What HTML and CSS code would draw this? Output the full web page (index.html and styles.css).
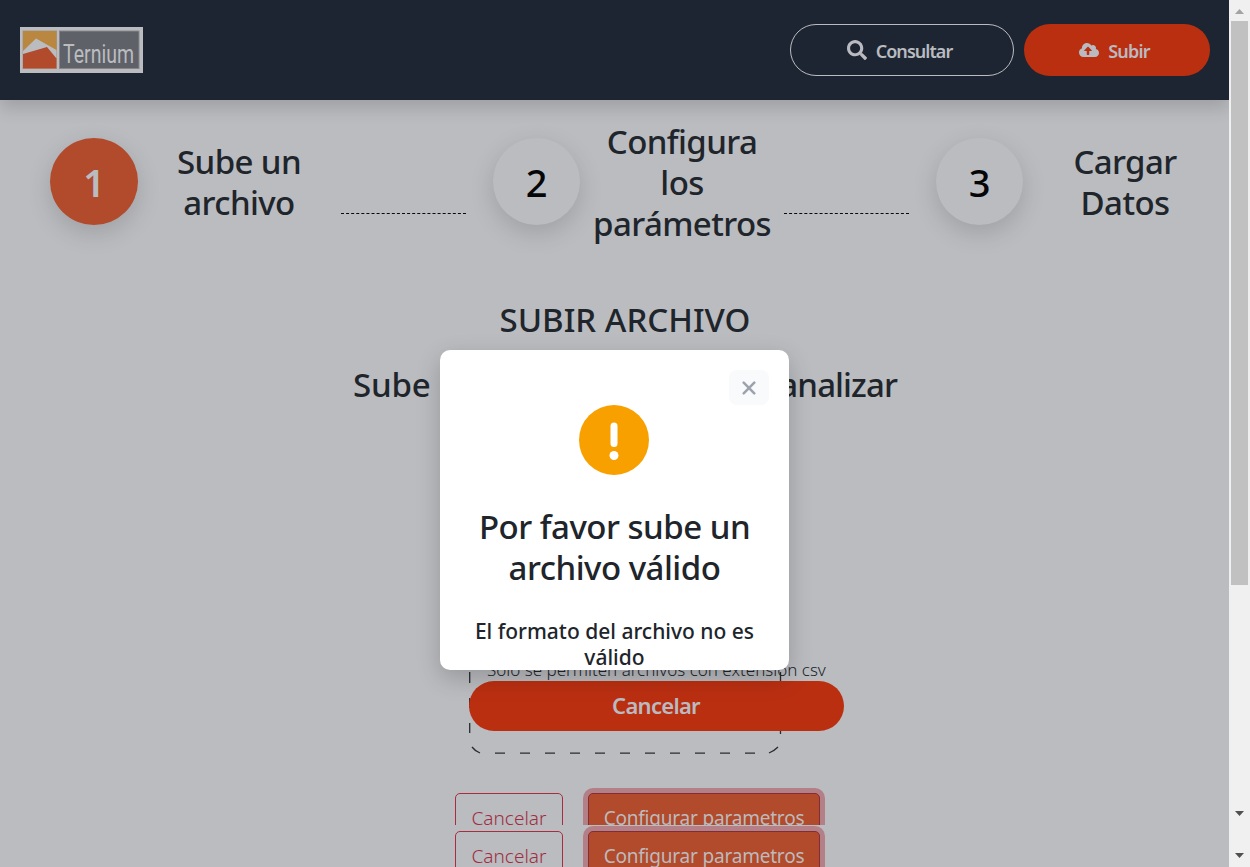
FILE: index.html
```html
<!DOCTYPE html>
<html lang="es">
<head>
<meta charset="utf-8">
<title>Subir archivo</title>
<link rel="stylesheet" href="styles.css">
</head>
<body>
<div class="window">
  <div class="page">
    <header class="navbar">
      <svg class="logo" width="123" height="46" viewBox="0 0 123 46">
        <rect width="123" height="46" fill="#bbbcc0"/>
        <rect x="2.500" y="3.500" width="34.500" height="38.500" fill="#999a9e"/>
        <rect x="3" y="4" width="33.500" height="37.500" fill="#b98740"/>
        <path d="M3 24 16 11.500 36.500 23V41.500H3Z" fill="#bbbcc0"/>
        <path d="M3 27 27 20 36.500 31.500V41.500H3Z" fill="#b14b2c"/>
        <rect x="39" y="3.500" width="80.500" height="38.500" fill="#85878c"/>
        <rect x="40" y="4.500" width="78.500" height="36.500" fill="#5e6168"/>
        <text class="logo-text" x="43" y="35.500" textLength="71" lengthAdjust="spacingAndGlyphs">Ternium</text>
      </svg>
      <nav class="nav-actions">
        <button class="pill pill-outline">
          <svg width="20" height="20" viewBox="0 0 512 512" fill="currentColor"><path d="M505 442.700 405.300 343c-4.500-4.500-10.600-7-17-7H372c27.600-35.300 44-79.700 44-128C416 93.100 322.900 0 208 0S0 93.100 0 208s93.100 208 208 208c48.300 0 92.700-16.400 128-44v16.300c0 6.400 2.500 12.500 7 17l99.700 99.700c9.400 9.400 24.600 9.400 33.900 0l28.300-28.300c9.400-9.400 9.400-24.600.1-34zM208 336c-70.700 0-128-57.200-128-128 0-70.700 57.200-128 128-128 70.700 0 128 57.200 128 128 0 70.700-57.200 128-128 128z"/></svg>
          <span class="label-consultar">Consultar</span>
        </button>
        <button class="pill pill-solid">
          <svg width="20" height="16" viewBox="0 0 640 512" fill="currentColor"><path d="M537.600 226.600c4.100-10.700 6.400-22.400 6.400-34.600 0-53-43-96-96-96-19.700 0-38.100 6-53.300 16.200C367 64.200 315.300 32 256 32c-88.400 0-160 71.600-160 160 0 2.700.1 5.400.2 8.100C40.200 219.800 0 273.200 0 336c0 79.500 64.500 144 144 144h368c70.700 0 128-57.300 128-128 0-61.900-44-113.600-102.400-125.400zM393.400 288H328v112c0 8.800-7.200 16-16 16h-48c-8.800 0-16-7.200-16-16V288h-65.400c-14.300 0-21.400-17.200-11.300-27.300l105.400-105.400c6.200-6.200 16.400-6.200 22.600 0l105.400 105.400c10.100 10.100 2.900 27.300-11.300 27.300z"/></svg>
          <span class="label-subir">Subir</span>
        </button>
      </nav>
    </header>

    <section class="steps">
      <div class="step"><div class="circle active">1</div><h2 class="step-title">Sube un<br>archivo</h2><i class="connector"></i></div>
      <div class="step"><div class="circle">2</div><h2 class="step-title">Configura<br>los<br>parámetros</h2><i class="connector"></i></div>
      <div class="step"><div class="circle">3</div><h2 class="step-title">Cargar<br>Datos</h2></div>
    </section>

    <main class="content">
      <h1 class="title">SUBIR ARCHIVO</h1>
      <h2 class="subtitle"><span>Sube</span><span class="subtitle-end">analizar</span></h2>
      <div class="dropzone">
        <svg class="dashes" width="314" height="90" viewBox="0 0 314 90" fill="none" stroke="#282b30" stroke-width="1.300">
          <path d="M.7 8V19M.7 34V44M.7 59V69M311.500 8V19M311.500 59V70"/>
          <path d="M3 83Q6 87 11 89M300 89Q305 87 309 83"/>
          <path d="M26 89.200H287" stroke-dasharray="10 15"/>
        </svg>
        <p class="hint">Solo se permiten archivos con extensión csv</p>
        <button class="cancel-upload">Cancelar</button>
      </div>
      <div class="form-actions">
        <button class="btn btn-outline">Cancelar</button>
        <button class="btn btn-primary">Configurar parametros</button>
      </div>
      <div class="form-actions">
        <button class="btn btn-outline">Cancelar</button>
        <button class="btn btn-primary">Configurar parametros</button>
      </div>
    </main>

    <div class="modal" role="dialog">
      <button class="close" aria-label="Cerrar">
        <svg width="14" height="14" viewBox="0 0 14 14" fill="none" stroke="#9ca3af" stroke-width="2.500" stroke-linecap="round"><path d="M1.700 1.700 12.300 12.300M12.300 1.700 1.700 12.300"/></svg>
      </button>
      <svg class="alert-icon" width="70" height="70" viewBox="0 0 70 70">
        <circle cx="35" cy="35" r="35" fill="#f7a000"/>
        <rect x="31.500" y="17.500" width="7" height="24.500" rx="3.500" fill="#fff"/>
        <circle cx="35" cy="50.500" r="4.500" fill="#fff"/>
      </svg>
      <h2 class="modal-title">Por favor sube un<br>archivo válido</h2>
      <p class="modal-text">El formato del archivo no es<br>válido</p>
    </div>
  </div>

  <aside class="scrollbar">
    <svg class="arrow-up" width="9" height="5" viewBox="0 0 9 5"><path d="M0 5 4.500 0 9 5Z" fill="#a3a3a3"/></svg>
    <div class="thumb"></div>
    <svg class="arrow-down" width="9" height="5" viewBox="0 0 9 5"><path d="M0 0H9L4.500 5Z" fill="#505050"/></svg>
    <svg class="arrow-down-last" width="9" height="5" viewBox="0 0 9 5"><path d="M0 0H9L4.500 5Z" fill="#505050"/></svg>
  </aside>
</div>
</body>
</html>
```
FILE: styles.css
```css
* { box-sizing: border-box; }
body { margin: 0; font-family: "Noto Sans", "Open Sans", sans-serif; color: #20252b; overflow: hidden; }
h1, h2, p { margin: 0; }
button { font-family: inherit; margin: 0; padding: 0; }
.window { display: flex; width: 1250px; height: 867px; overflow: hidden; }
.page { position: relative; width: 1229px; height: 867px; background: #bbbcc0; overflow: hidden; }

.navbar { display: flex; justify-content: space-between; align-items: center; height: 100px; padding: 0 19px 0 20px; background: #1e2532; box-shadow: 0 8px 16px rgba(0, 0, 0, .15); }
.logo { display: block; }
.logo-text { font: 25px "Roboto", sans-serif; fill: #bbbcc0; }
.nav-actions { display: flex; gap: 10px; }
.pill { display: flex; align-items: center; justify-content: center; gap: 9px; height: 52px; padding-right: 5px; border-radius: 26px; border: 0; color: #b9bbc0; font-size: 18px; font-weight: 600; line-height: 24px; }
.pill span { padding-top: 1px; }
.pill-outline { width: 224px; border: 1px solid #bbbcc0; background: transparent; }
.pill-solid { width: 186px; background: #bb2f11; }
.label-consultar { letter-spacing: -.95px; }
.label-subir { letter-spacing: -.8px; }

.steps { display: flex; height: 163px; padding: 20px 0 0 50px; }
.step { display: flex; flex: 0 0 443px; align-items: flex-start; }
.circle { flex: 0 0 87px; height: 87px; margin: 18px 1px 0 0; border-radius: 50%; background: #bbbcc0; box-shadow: 0 8px 24px rgba(0, 0, 0, .15); color: #050607; font-size: 38px; font-weight: 500; line-height: 88px; text-align: center; }
.circle.active { flex-basis: 88px; margin-right: 0; background: #b14b2c; color: #bbbcc0; font-weight: 600; }
.step-title { display: flex; align-items: center; justify-content: center; flex: 0 0 202px; height: 124px; margin-right: 1px; text-align: center; font-size: 33px; font-weight: 500; line-height: 41px; letter-spacing: -.6px; }
.connector { flex: 0 0 125px; margin-top: 93px; border-top: 1px dashed #08090a; }

.content { display: flex; flex-direction: column; }
.title { align-self: center; margin: 36px 0 0 21px; font-size: 33px; line-height: 41px; font-weight: 500; white-space: nowrap; }
.subtitle { display: flex; justify-content: space-between; width: 544px; margin: 24px 0 0 353px; font-size: 33px; line-height: 41px; font-weight: 500; letter-spacing: -.2px; }
.subtitle-end { letter-spacing: -.9px; }
.dropzone { position: relative; width: 375px; height: 90px; margin: 259px 0 0 469px; }
.dashes { position: absolute; left: 0; top: 0; }
.hint { width: 340px; height: 17px; margin-left: 18px; font-size: 17px; line-height: 11px; font-weight: 300; white-space: nowrap; }
.cancel-upload { position: relative; display: block; width: 375px; height: 50px; padding: 0 1px 2px 0; border: 0; border-radius: 25px; background: #bb2f11; color: #b9bbc0; font-size: 22px; font-weight: 600; letter-spacing: -.7px; }
.form-actions { display: flex; gap: 25px; height: 37px; margin: 34px 0 0 450px; padding: 5px; overflow: hidden; }
.form-actions + .form-actions { height: 41px; margin-top: 1px; }
.btn { height: 50px; flex-shrink: 0; border-radius: 5px; font-size: 19px; font-weight: 300; line-height: 26px; }
.btn-outline { width: 108px; border: 1px solid #a92d3e; background: transparent; color: #a02d3f; }
.btn-primary { width: 232px; border: 1px solid #852b35; background: #b14b2c; color: #bdbabc; box-shadow: 0 0 0 5px #b48087; font-weight: 400; letter-spacing: -.2px; }

.modal { position: absolute; left: 440px; top: 350px; display: flex; flex-direction: column; align-items: center; width: 349px; height: 320px; padding-top: 20px; border-radius: 10px; background: #fff; box-shadow: 0 8px 24px rgba(0, 0, 0, .2); }
.close { display: flex; align-items: center; justify-content: center; align-self: flex-end; width: 40px; height: 35px; margin-right: 20px; border: 0; border-radius: 8px; background: #f9fafb; }
.alert-icon { margin-right: 1px; }
.modal-title { margin-top: 31px; text-align: center; font-size: 33px; line-height: 41px; font-weight: 500; letter-spacing: -.5px; white-space: nowrap; }
.modal-text { margin-top: 30px; text-align: center; font-size: 21px; line-height: 26px; font-weight: 500; white-space: nowrap; }

.scrollbar { display: flex; flex-direction: column; align-items: center; width: 21px; background: #f0f0f0; }
.arrow-up { margin-top: 9px; }
.thumb { width: 17px; height: 564px; margin-top: 7px; background: #c1c1c1; }
.arrow-down { margin-top: 226px; }
.arrow-down-last { margin-top: 37px; }
```
